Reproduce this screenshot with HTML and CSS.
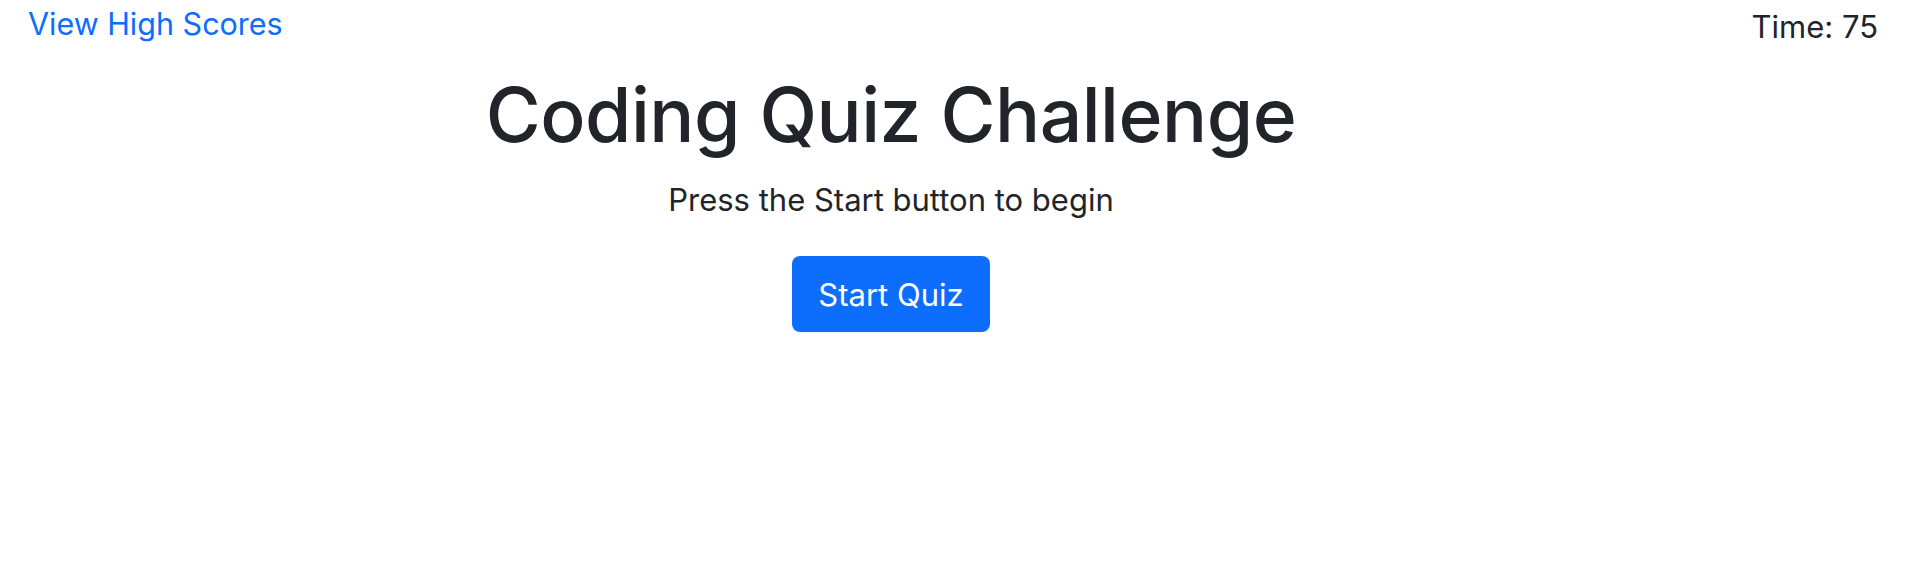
FILE: index.html
```html
<!DOCTYPE html>
<html lang="en">
<head>
<meta charset="utf-8">
<title>Coding Quiz</title>
<link rel="stylesheet" href="styles.css">
</head>
<body>
<header class="topbar">
  <a class="scores-link" href="#">View High Scores</a>
  <div class="timer">Time: 75</div>
</header>
<main class="quiz">
  <h1 class="quiz-title">Coding Quiz Challenge</h1>
  <p class="quiz-intro">Press the Start button to begin</p>
  <button class="start-btn" type="button">Start Quiz</button>
</main>
</body>
</html>
```
FILE: styles.css
```css
* { box-sizing: border-box; }
html, body { margin: 0; padding: 0; background: #fff; }
body {
  font-family: Inter, "Noto Sans", "Liberation Sans", sans-serif;
  color: #212529;
  width: 1914px;
  height: 576px;
  overflow: hidden;
}
.topbar {
  display: flex;
  justify-content: space-between;
  align-items: flex-start;
  padding: 4px 36px 0 28px;
}
.scores-link {
  color: #0d6efd;
  text-decoration: none;
  font-size: 30.5px;
  line-height: 40px;
}
.timer {
  font-size: 31px;
  line-height: 40px;
  margin-top: 3px;
}
.quiz {
  display: flex;
  flex-direction: column;
  align-items: center;
  padding-right: 132px;
}
.quiz-title {
  margin: 23px 0 0;
  font-size: 75px;
  font-weight: 500;
  line-height: 90px;
  letter-spacing: -0.5px;
}
.quiz-intro {
  margin: 21px 0 0;
  font-size: 31px;
  line-height: 38px;
}
.start-btn {
  margin-top: 37px;
  width: 198px;
  height: 76px;
  border: none;
  border-radius: 8px;
  background: #0d6efd;
  color: #fff;
  font-family: inherit;
  font-size: 31px;
}
```
